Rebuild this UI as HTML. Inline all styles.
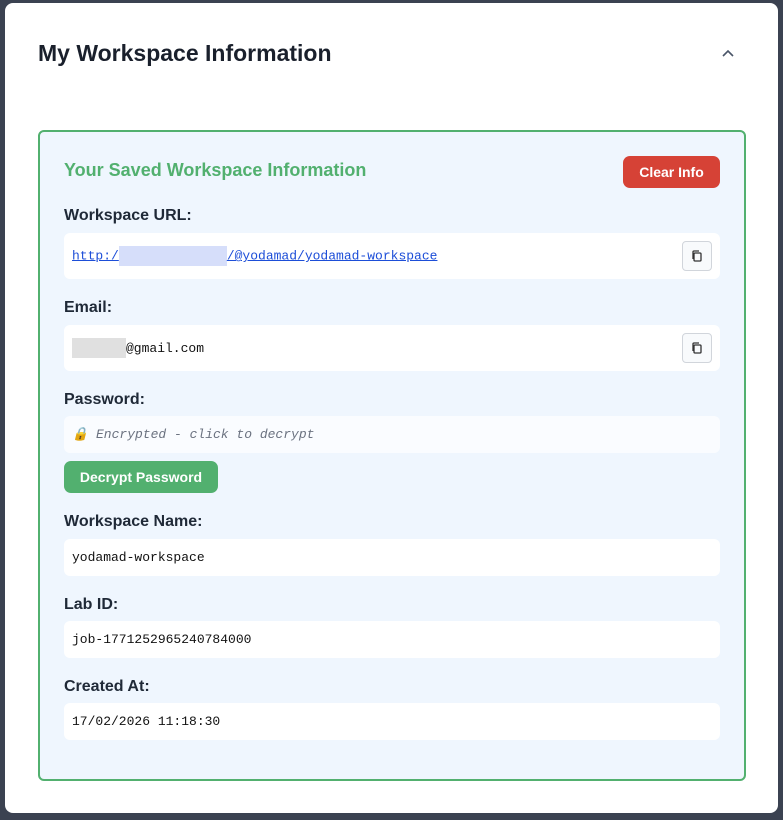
<!DOCTYPE html>
<html><head><style>
*{box-sizing:border-box;margin:0;padding:0}
body{width:783px;height:820px;background:#3b4251;font-family:"Liberation Sans",sans-serif;position:relative;overflow:hidden}
.card{position:absolute;left:5px;top:3px;width:773px;height:810px;background:#fff;border-radius:8px}
.a{position:absolute}
h1{position:absolute;left:38px;top:40px;font-size:23px;font-weight:bold;color:#1a202c}
.box{position:absolute;left:38px;top:130px;width:708px;height:651px;background:#eff6fe;border:2px solid #52b06f;border-radius:6px}
.lbl{position:absolute;left:64px;font-size:16px;font-weight:bold;color:#1f2937}
.fld{position:absolute;left:64px;width:656px;background:#fff;border-radius:6px;font-family:"Liberation Mono",monospace;font-size:13px;color:#111;padding-left:8px;display:flex;align-items:center}
.cp{position:absolute;right:8px;width:30px;height:30px;border:1px solid #d1d5db;border-radius:4px;background:#f8fafc;display:flex;align-items:center;justify-content:center}
.btn{position:absolute;color:#fff;font-weight:bold;font-size:14px;border-radius:7px;display:flex;align-items:center;justify-content:center}
</style></head><body>
<div class="card"></div>
<h1>My Workspace Information</h1>
<svg class="a" style="left:721px;top:48px" width="14" height="10" viewBox="0 0 14 10"><path d="M2 8L7 3L12 8" fill="none" stroke="#4a5568" stroke-width="1.6"/></svg>
<div class="box"></div>
<div class="a" style="left:64px;top:160px;font-size:18px;font-weight:bold;color:#52b06f">Your Saved Workspace Information</div>
<div class="btn" style="left:623px;top:156px;width:97px;height:32px;background:#d64236">Clear Info</div>
<div class="lbl" style="top:207px">Workspace URL:</div>
<div class="fld" style="top:233px;height:46px"><span style="color:#1d4ed8;text-decoration:underline">http:/<span style="display:inline-block;width:108px;height:20px;background:#d6defa;vertical-align:middle"></span>/@yodamad/yodamad-workspace</span>
<div class="cp"><svg width="14" height="14" viewBox="0 0 14 14"><rect x="4" y="4" width="7" height="8" rx="1" fill="none" stroke="#333" stroke-width="1.3"/><path d="M3 10V3a1 1 0 0 1 1-1h5" fill="none" stroke="#333" stroke-width="1.3"/></svg></div></div>
<div class="lbl" style="top:299px">Email:</div>
<div class="fld" style="top:325px;height:46px"><span style="display:inline-block;width:54px;height:20px;background:#e0e0e0"></span>@gmail.com
<div class="cp"><svg width="14" height="14" viewBox="0 0 14 14"><rect x="4" y="4" width="7" height="8" rx="1" fill="none" stroke="#333" stroke-width="1.3"/><path d="M3 10V3a1 1 0 0 1 1-1h5" fill="none" stroke="#333" stroke-width="1.3"/></svg></div></div>
<div class="lbl" style="top:391px">Password:</div>
<div class="fld" style="top:416px;height:37px;background:#fafcff;color:#6b7280;font-style:italic">🔒 Encrypted - click to decrypt</div>
<div class="btn" style="left:64px;top:461px;width:154px;height:32px;background:#52b06f">Decrypt Password</div>
<div class="lbl" style="top:513px">Workspace Name:</div>
<div class="fld" style="top:539px;height:37px">yodamad-workspace</div>
<div class="lbl" style="top:596px">Lab ID:</div>
<div class="fld" style="top:621px;height:37px">job-1771252965240784000</div>
<div class="lbl" style="top:678px">Created At:</div>
<div class="fld" style="top:703px;height:37px">17/02/2026 11:18:30</div>
</body></html>
